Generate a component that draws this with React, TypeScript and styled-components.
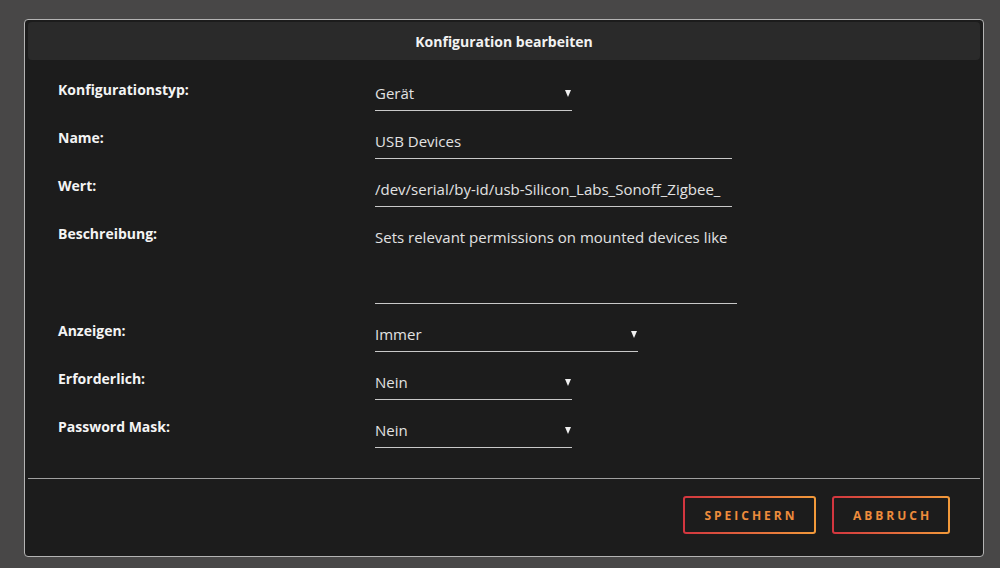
import React from "react";
import styled, { createGlobalStyle } from "styled-components";

const Global = createGlobalStyle`
  html, body { margin: 0; padding: 0; background: #484747; }
  body { font-family: "Open Sans", "Noto Sans", sans-serif; }
  * { box-sizing: border-box; }
`;

const Page = styled.div`
  width: 1000px;
  height: 568px;
  padding: 19px 0 0 24px;
  background: #484747;
`;

const Dialog = styled.div`
  width: 960px;
  height: 538px;
  background: #1c1c1c;
  border: 1px solid #b4b4b4;
  border-radius: 4px;
  padding: 2px 3px 0 3px;
  display: flex;
  flex-direction: column;
`;

const Header = styled.div`
  height: 38px;
  background: #2a2a2a;
  border-radius: 4px;
  display: flex;
  align-items: center;
  justify-content: center;
  color: #f2f2f2;
  font-weight: 700;
  font-size: 14px;
`;

const Body = styled.div`
  flex: 1;
  padding: 20px 0 0 30px;
  display: flex;
  flex-direction: column;
  gap: 17px;
`;

const Row = styled.div`
  display: grid;
  grid-template-columns: 317px auto;
  align-items: start;
`;

const Label = styled.div`
  color: #f4f4f4;
  font-weight: 700;
  font-size: 14px;
  line-height: 20px;
`;

const Field = styled.div<{ $w: number; $h?: number }>`
  width: ${(p) => p.$w}px;
  height: ${(p) => (p.$h ? p.$h : 31)}px;
  padding: 3px 0 0 0;
  border-bottom: 1px solid #c8c8c8;
  display: flex;
  align-items: flex-start;
  justify-content: space-between;
  color: #e2e2e2;
  font-size: 15px;
  line-height: 20px;
  white-space: nowrap;
  overflow: hidden;
`;

const Arrow = styled.span`
  width: 0;
  height: 0;
  margin: 7px 1px 0 0;
  border-left: 3.5px solid transparent;
  border-right: 3.5px solid transparent;
  border-top: 7px solid #f0f0f0;
  flex-shrink: 0;
`;

const Divider = styled.div`
  height: 1px;
  background: #a0a0a0;
`;

const Footer = styled.div`
  display: flex;
  justify-content: flex-end;
  gap: 16px;
  padding: 17px 30px 0 0;
  height: 77px;
`;

const Btn = styled.button<{ $w: number }>`
  width: ${(p) => p.$w}px;
  height: 38px;
  border: 2px solid transparent;
  border-radius: 3px;
  background:
    linear-gradient(#1c1c1c, #1c1c1c) padding-box,
    linear-gradient(90deg, #d2353f, #f29a3a) border-box;
  color: #ee8c3c;
  font-family: "Open Sans", "Noto Sans", sans-serif;
  font-weight: 700;
  font-size: 12px;
  letter-spacing: 3px;
  padding: 0 0 0 3px;
  cursor: pointer;
`;

type RowDef = { label: string; value: string; w: number; select?: boolean; h?: number };

const rows: RowDef[] = [
  { label: "Konfigurationstyp:", value: "Gerät", w: 197, select: true },
  { label: "Name:", value: "USB Devices", w: 357 },
  { label: "Wert:", value: "/dev/serial/by-id/usb-Silicon_Labs_Sonoff_Zigbee_", w: 357 },
  { label: "Beschreibung:", value: "Sets relevant permissions on mounted devices like", w: 362, h: 80 },
  { label: "Anzeigen:", value: "Immer", w: 263, select: true },
  { label: "Erforderlich:", value: "Nein", w: 197, select: true },
  { label: "Password Mask:", value: "Nein", w: 197, select: true },
];

export default function App() {
  return (
    <Page>
      <Global />
      <Dialog>
        <Header>Konfiguration bearbeiten</Header>
        <Body>
          {rows.map((r) => (
            <Row key={r.label}>
              <Label>{r.label}</Label>
              <Field $w={r.w} $h={r.h}>
                <span>{r.value}</span>
                {r.select && <Arrow />}
              </Field>
            </Row>
          ))}
        </Body>
        <Divider />
        <Footer>
          <Btn $w={133}>SPEICHERN</Btn>
          <Btn $w={118}>ABBRUCH</Btn>
        </Footer>
      </Dialog>
    </Page>
  );
}
